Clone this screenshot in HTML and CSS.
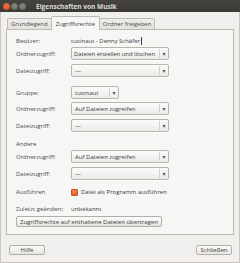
FILE: index.html
```html
<!DOCTYPE html>
<html lang="de">
<head>
<meta charset="utf-8">
<link rel="stylesheet" href="styles.css">
</head>
<body>
<div class="window">
  <div class="titlebar">
    <div class="wbtns">
      <span class="wb close"></span>
      <span class="wb"></span>
      <span class="wb"></span>
    </div>
    <span class="title">Eigenschaften von Musik</span>
  </div>
  <div class="content">
    <div class="tabs">
      <div class="tab">Grundlegend</div>
      <div class="tab active">Zugriffsrechte</div>
      <div class="tab">Ordner freigeben</div>
    </div>
    <div class="panel">
      <div class="row r-text">
        <span class="label">Besitzer:</span>
        <span class="value">tuxinaut - Denny Schäfer<span class="caret"></span></span>
      </div>
      <div class="row r-combo mt1">
        <span class="label">Ordnerzugriff:</span>
        <div class="combo w97"><span class="ctext tight">Dateien erstellen und löschen</span><span class="carrow">▾</span></div>
      </div>
      <div class="row r-combo mt4">
        <span class="label">Dateizugriff:</span>
        <div class="combo w97"><span class="ctext">—</span><span class="carrow">▾</span></div>
      </div>
      <div class="row r-combo mt9">
        <span class="label">Gruppe:</span>
        <div class="combo w48"><span class="ctext">tuxinaut</span><span class="carrow">▾</span></div>
      </div>
      <div class="row r-combo mt3">
        <span class="label">Ordnerzugriff:</span>
        <div class="combo w97"><span class="ctext">Auf Dateien zugreifen</span><span class="carrow">▾</span></div>
      </div>
      <div class="row r-combo mt4">
        <span class="label">Dateizugriff:</span>
        <div class="combo w97"><span class="ctext">—</span><span class="carrow">▾</span></div>
      </div>
      <div class="row r-text mt7">
        <span class="label">Andere</span>
      </div>
      <div class="row r-combo mt1">
        <span class="label">Ordnerzugriff:</span>
        <div class="combo w97"><span class="ctext">Auf Dateien zugreifen</span><span class="carrow">▾</span></div>
      </div>
      <div class="row r-combo mt4">
        <span class="label">Dateizugriff:</span>
        <div class="combo w97"><span class="ctext">—</span><span class="carrow">▾</span></div>
      </div>
      <div class="row r-text mt7">
        <span class="label">Ausführen</span>
        <span class="value check-row"><span class="checkbox"></span>Datei als Programm ausführen</span>
      </div>
      <div class="row r-text mt7">
        <span class="label">Zuletzt geändert:</span>
        <span class="value">unbekannt</span>
      </div>
      <div class="row mt2">
        <button class="btn">Zugriffsrechte auf enthaltene Dateien übertragen</button>
      </div>
    </div>
    <div class="footer">
      <button class="btn fbtn">Hilfe</button>
      <button class="btn fbtn">Schließen</button>
    </div>
  </div>
</div>
</body>
</html>
```

FILE: styles.css
```css
* { box-sizing: border-box; }
html, body { margin: 0; padding: 0; }
body {
  width: 240px;
  height: 263px;
  overflow: hidden;
  font-family: "Open Sans", "DejaVu Sans", sans-serif;
  font-size: 6px;
  color: #3c3c3c;
  background: #f0efed;
}
.window {
  width: 240px;
  height: 263px;
  display: flex;
  flex-direction: column;
  border-left: 1px solid #c9c6c1;
  border-right: 1px solid #c9c6c1;
  border-bottom: 1px solid #c9c6c1;
}
.titlebar {
  height: 12px;
  background: linear-gradient(#45443f, #3a3935);
  display: flex;
  align-items: center;
  padding-left: 3px;
  margin: 0 -1px;
}
.wbtns { display: flex; gap: 1px; }
.wb {
  width: 7px;
  height: 7px;
  border-radius: 50%;
  background: radial-gradient(circle at 50% 40%, #8c8a85, #5e5c57);
}
.wb.close { background: radial-gradient(circle at 50% 40%, #f0774a, #c8431c); }
.title {
  margin-left: 10px;
  color: #dfdbd2;
  font-weight: bold;
  font-size: 6.5px;
}
.content {
  flex: 1;
  display: flex;
  flex-direction: column;
  padding: 5px 5px 0 5px;
}
.tabs {
  display: flex;
  align-items: flex-end;
  padding-left: 1px;
  height: 12px;
  position: relative;
  z-index: 1;
}
.tab {
  height: 11px;
  padding: 0 3px;
  display: flex;
  align-items: center;
  border: 1px solid #bdb9b3;
  border-bottom: none;
  border-radius: 2px 2px 0 0;
  background: linear-gradient(#eeedeb, #e3e1de);
  color: #4a4a4a;
  margin-right: -1px;
}
.tab.active {
  background: #f6f6f5;
  margin-bottom: -1px;
  height: 14px;
  padding: 0 4px;
  color: #3c3c3c;
}
.panel {
  border: 1px solid #bdb9b3;
  background: #f6f6f5;
  height: 206px;
  padding: 6px 9px 0 9px;
  display: flex;
  flex-direction: column;
}
.row {
  display: flex;
  align-items: center;
}
.r-text { height: 10px; }
.r-combo { height: 13px; }
.mt1 { margin-top: 1px; }
.mt2 { margin-top: 2px; }
.mt3 { margin-top: 3px; }
.mt4 { margin-top: 4px; }
.mt7 { margin-top: 7px; }
.mt9 { margin-top: 9px; }
.label {
  width: 55px;
  flex: none;
  color: #4b4b4b;
}
.value { color: #3c3c3c; display: flex; align-items: center; }
.caret {
  display: inline-block;
  width: 1px;
  height: 8px;
  background: #3c3c3c;
  margin-left: 1px;
}
.combo {
  height: 13px;
  border: 1px solid #b9b5ae;
  border-radius: 2px;
  background: linear-gradient(#fbfbfa, #ecebe9);
  display: flex;
  align-items: center;
  box-shadow: 0 1px 0 rgba(255,255,255,0.6);
}
.w97 { width: 98px; }
.w48 { width: 48px; }
.ctext {
  flex: 1;
  padding-left: 3px;
  white-space: nowrap;
  overflow: hidden;
}
.ctext.tight { letter-spacing: -0.08px; padding-left: 2px; }
.carrow {
  width: 9px;
  height: 9px;
  border-left: 1px solid #d3d0cb;
  display: flex;
  align-items: center;
  justify-content: center;
  font-size: 6px;
  color: #555;
  flex: none;
}
.check-row { gap: 3px; }
.checkbox {
  width: 7px;
  height: 7px;
  border-radius: 1px;
  background: linear-gradient(#f2875a, #e0622d);
  border: 1px solid #c9501f;
}
.btn {
  font-family: inherit;
  font-size: 6px;
  color: #3c3c3c;
  height: 11px;
  padding: 0 3px;
  border: 1px solid #b3afa8;
  border-radius: 2px;
  background: linear-gradient(#fbfbfa, #e7e5e2);
  display: flex;
  align-items: center;
  white-space: nowrap;
}
.footer {
  display: flex;
  justify-content: space-between;
  padding: 10px 2px 0 3px;
}
.fbtn {
  width: 36px;
  justify-content: center;
  height: 10px;
}
```
